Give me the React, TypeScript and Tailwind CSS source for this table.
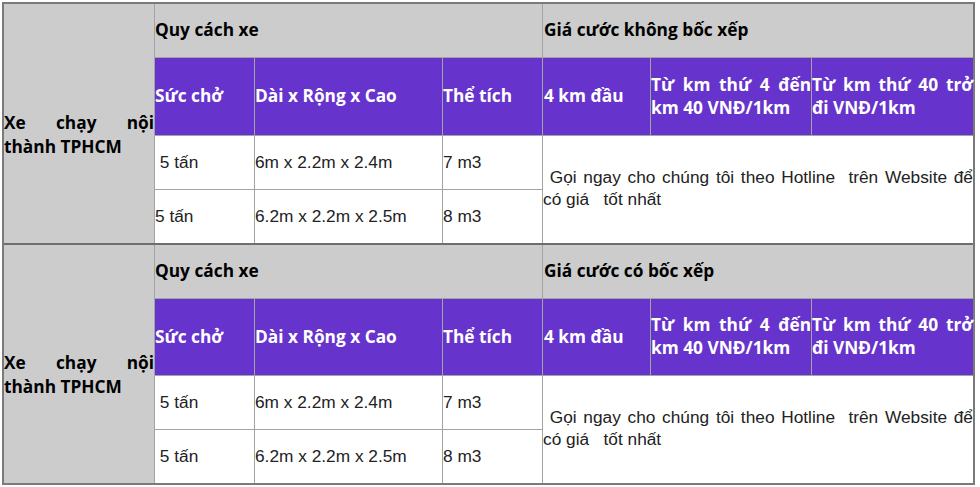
import React from "react";

const head = "font-['Open_Sans',sans-serif] font-bold text-[17.3px] leading-[23px]";
const body = "font-['Liberation_Sans',Arial,sans-serif] text-[17.3px] leading-[22px] text-[#222]";

function Block({ title, second }: { title: string; second?: boolean }) {
  return (
    <div
      className={`grid grid-cols-[150px_99px_187px_99px_107px_160px_161px] gap-px bg-[#a3a3a3] ${
        second ? "grid-rows-[53px_76px_53px_53px]" : "grid-rows-[53px_77px_53px_53px]"
      }`}
    >
      <div className={`row-span-4 bg-[#cccccc] flex flex-col justify-center pt-[22px] text-black text-justify ${head} leading-[24px]`}>
        <p className="[text-align-last:left]">Xe chạy nội thành TPHCM</p>
      </div>
      <div className={`col-span-3 bg-[#cccccc] flex items-center pb-[2px] text-black ${head}`}>Quy cách xe</div>
      <div className={`col-span-3 bg-[#cccccc] flex items-center pb-[2px] pl-px text-black ${head}`}>{title}</div>

      <div className={`bg-[#6633cc] flex items-center pb-[2px] text-white ${head}`}>Sức chở</div>
      <div className={`bg-[#6633cc] flex items-center pb-[2px] text-white ${head}`}>Dài x Rộng x Cao</div>
      <div className={`bg-[#6633cc] flex items-center pb-[2px] text-white ${head}`}>Thể tích</div>
      <div className={`bg-[#6633cc] flex items-center pb-[2px] pl-px text-white ${head}`}>4 km đầu</div>
      <div className={`bg-[#6633cc] flex items-center pb-[2px] text-white ${head}`}>
        <p className="w-full text-justify">Từ km thứ 4 đến km 40 VNĐ/1km</p>
      </div>
      <div className={`bg-[#6633cc] flex items-center pb-[2px] text-white ${head}`}>
        <p className="w-full text-justify">Từ km thứ 40 trở đi VNĐ/1km</p>
      </div>

      <div className={`bg-white flex items-center pb-[1px] whitespace-pre ${body}`}>{" 5 tấn"}</div>
      <div className={`bg-white flex items-center pb-[1px] ${body}`}>6m x 2.2m x 2.4m</div>
      <div className={`bg-white flex items-center pb-[1px] ${body}`}>7 m3</div>
      <div className={`col-span-3 row-span-2 bg-white flex items-center pb-[3px] ${body}`}>
        <p className="w-full text-justify whitespace-pre-wrap">{" Gọi ngay cho chúng tôi theo Hotline  trên Website để có giá   tốt nhất"}</p>
      </div>

      <div className={`bg-white flex items-center pb-[1px] whitespace-pre ${body}`}>{second ? " 5 tấn" : "5 tấn"}</div>
      <div className={`bg-white flex items-center pb-[1px] ${body}`}>6.2m x 2.2m x 2.5m</div>
      <div className={`bg-white flex items-center pb-[1px] ${body}`}>8 m3</div>
    </div>
  );
}

export default function App() {
  return (
    <div className="w-[980px] h-[487px] bg-white pt-[2px] pl-[2px]">
      <div className="w-[973px] border-2 border-[#7a7a7a] bg-white">
        <Block title="Giá cước không bốc xếp" />
        <div className="h-[2px] bg-[#6e6e6e]" />
        <Block title="Giá cước có bốc xếp" second />
      </div>
    </div>
  );
}
